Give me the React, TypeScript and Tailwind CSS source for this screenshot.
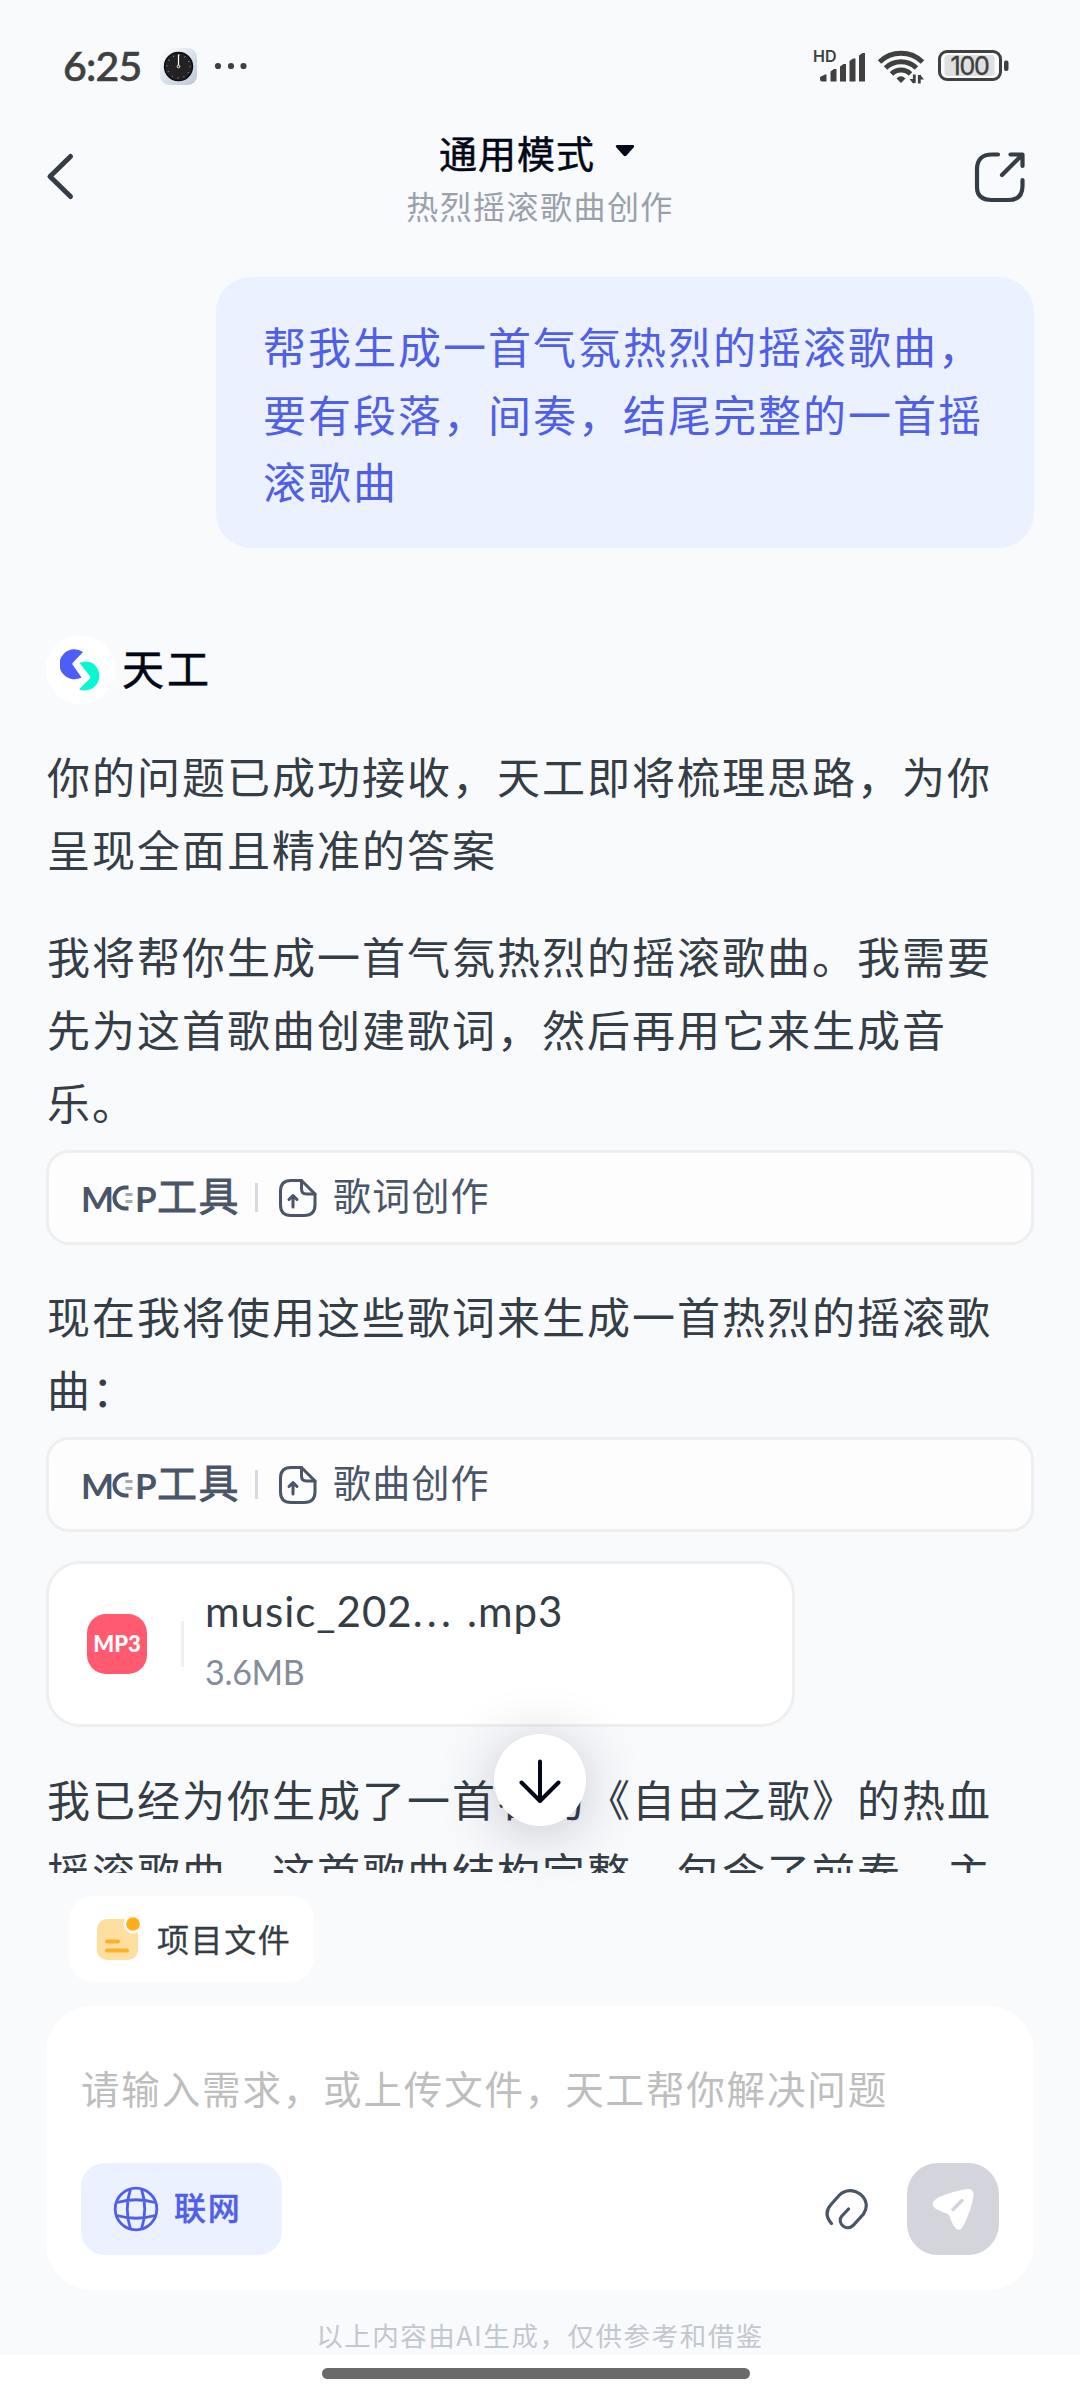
import type { ReactNode } from "react";

const BODY_TEXT =
  "whitespace-nowrap pl-[1px] text-[43px] leading-[73px] tracking-[2px] text-[#353d47]";

function StatusBar() {
  return (
    <div className="flex h-[132px] shrink-0 items-center pl-[63px] pr-[70px] text-[#404040]">
      <span className="mt-[-2px] w-[97px] font-['Lato','Noto_Sans',sans-serif] text-[41px] font-medium leading-none tracking-[-0.8px] [-webkit-text-stroke:0.6px_#404040]">
        6:25
      </span>
      <svg width="37" height="37" viewBox="0 0 37 37">
        <defs>
          <linearGradient id="clockFace" x1="0" y1="0" x2="1" y2="1">
            <stop offset="0" stopColor="#ffffff" />
            <stop offset="1" stopColor="#b9c6da" />
          </linearGradient>
        </defs>
        <rect width="37" height="37" rx="9" fill="url(#clockFace)" />
        <circle cx="18.5" cy="18.5" r="14" fill="#222" stroke="#0b0b0b" strokeWidth="1.4" />
        <circle cx="18.5" cy="18.5" r="11.5" fill="none" stroke="#999" strokeWidth="1.4" strokeDasharray="0.8 5.22" />
        <path d="M18.5 6.5V17" stroke="#fff" strokeWidth="1.2" />
        <circle cx="18.5" cy="18.5" r="1.3" fill="#222" stroke="#fff" />
      </svg>
      <svg className="ml-[17px]" width="34" height="8" viewBox="0 0 34 8" fill="currentColor">
        <circle cx="4" cy="4" r="3.1" />
        <circle cx="17" cy="4" r="3.1" />
        <circle cx="29.5" cy="4" r="3.1" />
      </svg>
      <div className="ml-auto flex items-center">
        <svg width="56" height="40" viewBox="-4 -2 56 40" fill="currentColor">
          <text x="-2" y="13.5" fontSize="16" fontWeight="600" fontFamily="Inter, sans-serif">
            HD
          </text>
          <path d="M5 31V29l5-2.5h1.5V33.5H7Q5 33.5 5 31zM15.5 23.500l3.500-2.500h2.500v12.500h-6zM25 18.500l3.500-2.500H31v17.500h-6zM34.500 13l3.500-2.500h2.500v23h-6zM44 7.500l3.500-2.500H50v28.500h-6z" />
        </svg>
        <svg className="ml-[10px]" width="48" height="36" viewBox="0 0 48 36" fill="none" stroke="currentColor" strokeWidth="5">
          <path d="M2.500 14A31 31 0 0 1 45.500 14" />
          <path d="M8.500 20A22.500 22.500 0 0 1 39.500 20" />
          <path d="M14.500 26A13.500 13.500 0 0 1 33.500 26" />
          <path d="M19.500 30.500Q24 26 28.500 30.500L24 35z" fill="currentColor" stroke="none" />
          <path d="M37.300 26.500V35M42.300 35.500V27" strokeWidth="2.800" />
          <path d="M32.500 31h4v5zM43 26.500v5h4z" fill="currentColor" stroke="none" />
        </svg>
        <svg className="ml-[13px]" width="72" height="32" viewBox="0 0 72 32">
          <rect x="1.500" y="1.500" width="61" height="28" rx="7.500" fill="none" stroke="currentColor" strokeWidth="3" />
          <rect x="6.500" y="5" width="50" height="21" rx="3.500" fill="#dfe0e2" />
          <rect x="66" y="10.500" width="4.500" height="10.500" rx="2" fill="currentColor" />
          <text x="31.500" y="24.500" textAnchor="middle" fontSize="25" fontFamily="Inter, sans-serif" fill="currentColor" stroke="currentColor" strokeWidth="0.4" letterSpacing="-1.200">
            100
          </text>
        </svg>
      </div>
    </div>
  );
}

function Header() {
  return (
    <div className="grid h-[120px] shrink-0 grid-cols-[200px_1fr_200px]">
      <svg className="ml-[44px] mt-[20px]" width="32" height="50" viewBox="0 0 32 50" fill="none">
        <path d="M26.500 4.500L6 24.500L26.500 44.500" stroke="#353d47" strokeWidth="5" strokeLinecap="round" strokeLinejoin="round" />
      </svg>
      <div className="text-center">
        <div className="mt-[-1px] flex h-[42px] items-center justify-center pr-[6px] text-[38px] leading-[42px] tracking-[1px] text-[#020817] [-webkit-text-stroke:0.5px_#020817]">
          通用模式
          <svg className="ml-[20px] mt-[-2px]" width="20" height="12" viewBox="0 0 20 12">
            <path d="M2 0h16q2 .5 1 2L11.500 10.500q-1.500 1.500-3 0L1 2Q0 .5 2 0z" fill="#020817" />
          </svg>
        </div>
        <div className="mt-[12px] text-[32px] leading-[40px] tracking-[1.45px] text-[#9aa1ab]">
          热烈摇滚歌曲创作
        </div>
      </div>
      <svg className="ml-auto mr-[52px] mt-[18px]" width="56" height="56" viewBox="0 0 56 56" fill="none" stroke="#353d47" strokeWidth="4.200" strokeLinecap="round" strokeLinejoin="round">
        <path d="M26 4.500H20Q5 4.500 5 19.500v17.500Q5 50 20 50h16Q50.500 50 50.500 36v-6" />
        <path d="M38.500 4.500h12v11.500M50 5L30 25" />
      </svg>
    </div>
  );
}

function ToolCard({ label }: { label: string }) {
  return (
    <div className="flex h-[95px] w-[988px] items-center rounded-[23px] border-3 border-[#edeff1] bg-[#fdfdfd] pl-[32px] text-[#4a5567]">
      <div className="flex h-[36px] items-center font-['Lato',sans-serif] text-[35px] font-bold leading-[36px]">
        <span className="w-[30px]">M</span>
        <svg width="23" height="28" viewBox="0 0 23 28" fill="none">
          <path d="M17.500 3.500H14A10.500 10.500 0 0 0 14 24.500h3.500" stroke="currentColor" strokeWidth="4" />
          <path d="M14.500 10.500h7M14.500 17.500h7" stroke="#a3a9b4" strokeWidth="3" />
        </svg>
        <span className="ml-px w-[22px]">P</span>
      </div>
      <span className="mt-[-7px] text-[40px] leading-[50px] tracking-[1.5px] [-webkit-text-stroke:0.8px_#4a5567]">工具</span>
      <div className="ml-[15px] h-[29px] w-[3px] bg-[#d7d9e0]" />
      <svg className="ml-[20px] mt-px" width="40" height="40" viewBox="0 0 40 40" fill="none" stroke="currentColor" strokeWidth="3" strokeLinecap="round" strokeLinejoin="round">
        <path d="M23.500 2.500H13Q2.500 2.500 2.500 13v14Q2.500 37.500 13 37.500h13Q37 37.500 37 27V16z" />
        <path d="M23.500 2.500v8.500q0 5 5 5H37M15 29V18M11 21.500l4-4 4 4" />
      </svg>
      <span className="ml-[15px] mt-[-7px] text-[38px] leading-[50px] tracking-[1.2px]">{label}</span>
    </div>
  );
}

function FileCard() {
  return (
    <div className="flex h-[166px] w-[749px] items-center rounded-[34px] border-3 border-[#edeff1] bg-white pl-[38px] font-['Lato','Noto_Sans',sans-serif]">
      <div className="flex size-[60px] items-center justify-center rounded-[19px] bg-[#ff5a6f] text-[22px] font-black leading-none text-white">
        MP3
      </div>
      <div className="ml-[34px] h-[46px] w-[3px] bg-[#edeff1]" />
      <div className="ml-[21px] flex flex-col">
        <span className="mt-[-8px] text-[42px] leading-[54px] tracking-[1px] text-[#353d47]">
          music_202<span className="tracking-[4.3px]">...</span> .mp3
        </span>
        <span className="mt-[10px] text-[34px] leading-[48px] tracking-[-0.3px] text-[#858d99]">3.6MB</span>
      </div>
    </div>
  );
}

function Paragraph({ children, className }: { children: ReactNode; className: string }) {
  return <p className={`${BODY_TEXT} ${className}`}>{children}</p>;
}

function Conversation() {
  return (
    <div className="h-[1621px] shrink-0 overflow-hidden pl-[46px] pr-[46px] pt-[25px]">
      <div className="ml-auto h-[271px] w-[818px] whitespace-nowrap rounded-[35px] bg-[#ebf1ff] pl-[47px] pt-[35px] text-[43px] leading-[67.5px] tracking-[2px] text-[#4f5fe8]">
        帮我生成一首气氛热烈的摇滚歌曲，
        <br />
        要有段落，间奏，结尾完整的一首摇
        <br />
        滚歌曲
      </div>

      <div className="mt-[87px] flex h-[69px] items-center">
        <div className="flex size-[69px] items-center justify-center rounded-full bg-white">
          <svg width="42" height="42" viewBox="0 0 42 42">
            <path d="M23 3A15 15 0 1 0 21.500 28.500L12.500 15.500Q12 14.500 13 13.500z" fill="#4d5dfb" />
            <path d="M19.500 14Q24 11.500 30 13A14.800 14.800 0 0 1 19 40.500L29.500 30q1.500-1.500 0-3.500z" fill="#06f9d0" />
          </svg>
        </div>
        <span className="ml-[7px] mt-[-6px] text-[42px] leading-[60px] tracking-[3px] text-[#020817] [-webkit-text-stroke:0.6px_#020817]">天工</span>
      </div>

      <Paragraph className="mt-[35px]">
        你的问题已成功接收，天工即将梳理思路，为你
        <br />
        呈现全面且精准的答案
      </Paragraph>
      <Paragraph className="mt-[34px]">
        我将帮你生成一首气氛热烈的摇滚歌曲。我需要
        <br />
        先为这首歌曲创建歌词，然后再用它来生成音
        <br />
        乐。
      </Paragraph>
      <div className="mt-[12px]">
        <ToolCard label="歌词创作" />
      </div>
      <Paragraph className="mt-[34px]">
        现在我将使用这些歌词来生成一首热烈的摇滚歌
        <br />
        曲：
      </Paragraph>
      <div className="mt-[12px]">
        <ToolCard label="歌曲创作" />
      </div>
      <div className="mt-[29px]">
        <FileCard />
      </div>
      <Paragraph className="mt-[35px]">
        我已经为你生成了一首名为《自由之歌》的热血
        <br />
        摇滚歌曲。这首歌曲结构完整，包含了前奏、主
      </Paragraph>
    </div>
  );
}

function ScrollDownButton() {
  return (
    <button
      type="button"
      className="absolute left-[494px] top-[1734px] flex size-[92px] items-center justify-center rounded-full bg-white shadow-[0_8px_60px_rgba(30,30,60,0.24)]"
    >
      <svg width="46" height="46" viewBox="0 0 46 46" fill="none" stroke="#020817" strokeWidth="4" strokeLinecap="round" strokeLinejoin="round">
        <path d="M23 4.500V44M4.500 25.500L23 44L41.500 25.500" />
      </svg>
    </button>
  );
}

function Composer() {
  return (
    <div className="mt-[24px] flex h-[284px] w-[988px] flex-col rounded-[46px] bg-white px-[35px] pb-[35px] pt-[51px]">
      <div className="h-[60px] whitespace-nowrap text-[38.5px] leading-[60px] tracking-[1.85px] text-[#bebebe]">
        请输入需求，或上传文件，天工帮你解决问题
      </div>
      <div className="mt-auto flex h-[92px] items-center">
        <button type="button" className="flex h-[92px] w-[201px] items-center rounded-[24px] bg-[#ebf1ff] pl-[32px] text-[#4f5fe8]">
          <svg width="46" height="46" viewBox="0 0 46 46" fill="none" stroke="currentColor" strokeWidth="2.800">
            <circle cx="23" cy="23" r="20.800" />
            <path d="M17.500 3Q11 23 17.500 43M28.500 3Q35 23 28.500 43M4 16.500Q23 11 42 16.500M4 29.500Q23 35 42 29.500" />
          </svg>
          <span className="ml-[15px] mt-[-7px] text-[32px] font-medium leading-[46px] tracking-[1.8px] [-webkit-text-stroke:0.4px_#4f5fe8]">联网</span>
        </button>
        <svg className="ml-auto" width="44" height="44" viewBox="0 0 44 44" fill="none" stroke="#4a5567" strokeWidth="3.200" strokeLinecap="round">
          <path d="M7.500 36.500C1 29 2 23 7 17.500L15 8.500C28-5 50 12 39.500 27L29 38.500C22 45 13 36 17.500 29.500L24.500 22" />
        </svg>
        <button type="button" className="ml-[39px] flex size-[92px] items-center justify-center rounded-[31px] bg-[#d4d5dc]">
          <svg width="42" height="44" viewBox="0 0 42 44">
            <path d="M32 2.500Q42.500 0 41.500 9.500Q39 24 31.500 38.500Q27 47 21.500 38.500Q19 35 17.500 29Q17 27.500 15.500 27L5 22.500Q-3 17.500 4 12Q11 7 32 2.500z" fill="#fff" />
            <path d="M21 22.500L30 13.500" stroke="#d4d5dc" strokeWidth="3.400" strokeLinecap="round" />
          </svg>
        </button>
      </div>
    </div>
  );
}

export default function App() {
  return (
    <div className="relative flex h-[2400px] w-[1080px] flex-col overflow-hidden bg-[#f9fafc] font-['Noto_Sans_CJK_SC','Noto_Sans',sans-serif]">
      <StatusBar />
      <Header />
      <Conversation />

      <div className="flex h-[482px] shrink-0 flex-col px-[46px] pt-[23px]">
        <button type="button" className="ml-[23px] flex h-[86px] w-[245px] shrink-0 items-center rounded-[24px] bg-white pl-[27px]">
          <svg width="46" height="46" viewBox="0 0 46 46">
            <rect x="1" y="3" width="41" height="41" rx="10" fill="#ffdf9f" />
            <circle cx="37" cy="8" r="9.500" fill="#fff" />
            <circle cx="37" cy="8" r="6.800" fill="#ffae17" />
            <path d="M11 25.500h11M11 34.500h20" stroke="#fbb02a" strokeWidth="4" strokeLinecap="round" />
          </svg>
          <span className="ml-[15px] mt-[-3px] text-[32px] leading-[46px] tracking-[1.6px] text-[#353d47] [-webkit-text-stroke:0.3px_#353d47]">
            项目文件
          </span>
        </button>
        <Composer />
        <div className="mt-[25px] whitespace-nowrap text-center text-[26.500px] leading-[40px] tracking-[1.55px] text-[#c3c7cf]">
          以上内容由AI生成，仅供参考和借鉴
        </div>
      </div>

      <div className="flex h-[45px] shrink-0 justify-center bg-white pr-[8px] pt-[13px]">
        <div className="h-[11px] w-[428px] rounded-full bg-[#6a6a6a]" />
      </div>
      <ScrollDownButton />
    </div>
  );
}
